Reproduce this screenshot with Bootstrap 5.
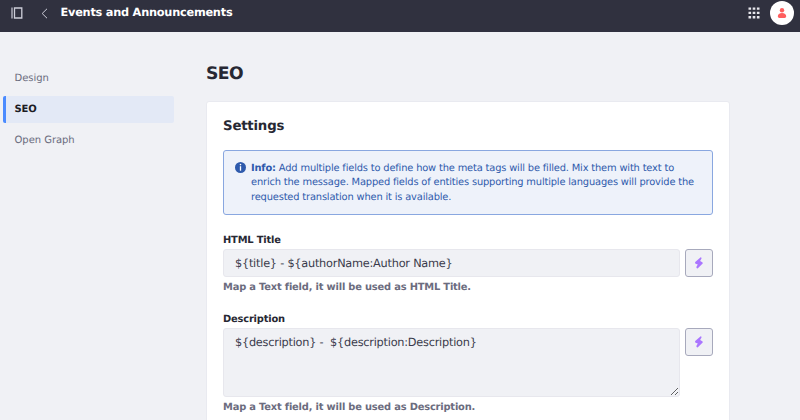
<!DOCTYPE html>
<html lang="en">
<head>
<meta charset="utf-8">
<meta name="viewport" content="width=device-width, initial-scale=1">
<title>Events and Announcements</title>
<link href="https://cdn.jsdelivr.net/npm/bootstrap@5.3.0/dist/css/bootstrap.min.css" rel="stylesheet">
<style>
body{font-family:"DejaVu Sans",sans-serif;background:#f0f1f5;color:#272833;font-size:10px;height:420px;overflow:hidden;text-rendering:geometricPrecision}
svg{display:block;flex:none}
.topbar{height:32px;background:#30313f;padding:0 6px 6px 11px}
.topbar h1{font-size:11.3px;line-height:16px;margin-left:12.5px;color:#fff;letter-spacing:-.22px}
.topbar .avatar{width:24px;height:24px;background:#fff;margin-left:10px}
.side{width:174px;padding:33px 0 0 3px}
.side .nav-link{height:27px;margin-bottom:4px;padding:0 0 0 8.5px;border-left:3px solid transparent;border-radius:2px;color:#6b6c7e;font-size:10px;line-height:28px;letter-spacing:-.04px}
.side .nav-link.active{background:#e3e9f6;border-left-color:#4b8bff;color:#1c1c24;font-weight:700;letter-spacing:-.1px}
.content-col{width:524px;margin-left:32px;padding-top:31px}
.content-col h2{font-size:17.2px;line-height:22px;margin-bottom:16px;letter-spacing:-.55px}
.panel{border:1px solid #e9eaf0;border-radius:3px;padding:16px 16px;height:340px}
.panel h3{font-size:13.3px;line-height:18px;margin-bottom:14px;letter-spacing:-.2px}
.info-box{background:#eef2fa;border:1px solid #89a7e0;border-radius:3px;color:#2e5aac;padding:11px 12px 9px 11px;height:65px;line-height:14.3px;font-size:9.9px;margin-bottom:18px;gap:5px;white-space:nowrap;letter-spacing:-.17px}
.form-label{font-size:9.9px;line-height:15px;font-weight:700;margin:0 0 1px;display:block;letter-spacing:-.18px}
.form-control,.form-control:focus{background:#f0f1f5;border:1px solid #e7e7ed;border-radius:3px;color:#393a4a;font-size:11.3px;padding:0 11px;height:28px;box-shadow:none;text-rendering:inherit;letter-spacing:-.23px}
textarea.form-control{height:69px;min-height:0;padding-top:5px;line-height:17px}
.map-btn,.map-btn:hover{width:28px;height:28px;border:1px solid #a7a9bc;border-radius:3px;background:#f0f1f5;flex:none}
.hint{font-size:9.9px;line-height:15px;font-weight:700;color:#6b6c7e;margin-top:3px;letter-spacing:-.18px}
.field{margin-bottom:17px}
.field .d-flex{gap:5px}
</style>
<script src="https://cdn.jsdelivr.net/npm/bootstrap@5.3.0/dist/js/bootstrap.bundle.min.js"></script>
</head>
<body>
<header class="topbar d-flex align-items-center">
  <svg width="12" height="12" viewBox="0 0 12 12" fill="none" stroke="#cdced9"><path d="M1 .5v11" stroke-width="1.2"/><path d="M3.5 1h7.300v10H3.500z" stroke-width="1.300"/></svg>
  <svg width="7" height="11" viewBox="0 0 7 11" style="margin-left:18px" fill="none" stroke="#cdced9"><path d="M6 .8 1.200 5.500 6 10.200"/></svg>
  <h1 class="fw-bold mb-0">Events and Announcements</h1>
  <svg class="ms-auto" width="12" height="12" viewBox="0 0 12 12" fill="#e7e7ed"><path d="M.5.5h2.6v2.3H.5zM4.7.5h2.6v2.3H4.7zM8.9.5h2.6v2.3H8.9zM.5 4.8h2.6v2.3H.5zM4.7 4.8h2.6v2.3H4.7zM8.9 4.8h2.6v2.3H8.9zM.5 9.1h2.6v2.3H.5zM4.7 9.1h2.6v2.3H4.7zM8.9 9.1h2.6v2.3H8.9z"/></svg>
  <span class="avatar rounded-circle d-flex align-items-center justify-content-center"><svg width="10" height="10" viewBox="0 0 10 10" fill="#ff5f5f"><circle cx="5" cy="2.2" r="2.2"/><path d="M.8 8.3C.8 6.4 2.4 5.1 5 5.1s4.200 1.300 4.200 3.200C9.200 9.500 8.400 9.900 7.700 9.900H2.300C1.600 9.900.8 9.500.8 8.300z"/></svg></span>
</header>
<div class="d-flex">
  <nav class="side nav flex-column flex-nowrap">
    <a class="nav-link" href="#">Design</a>
    <a class="nav-link active" href="#">SEO</a>
    <a class="nav-link" href="#">Open Graph</a>
  </nav>
  <main class="content-col">
    <h2 class="fw-bold">SEO</h2>
    <section class="panel bg-white">
      <h3 class="fw-bold">Settings</h3>
      <div class="info-box d-flex" role="alert">
        <svg width="11" height="11" viewBox="0 0 11 11"><circle cx="5.500" cy="5.500" r="5.500" fill="#2e5aac"/><circle cx="5.500" cy="2.600" r=".8" fill="#fff"/><path d="M5.500 4.200v4.500" stroke="#fff" stroke-width="1.300"/></svg>
        <div><strong>Info:</strong> Add multiple fields to define how the meta tags will be filled. Mix them with text to<br>enrich the message. Mapped fields of entities supporting multiple languages will provide the<br>requested translation when it is available.</div>
      </div>
      <div class="field">
        <label class="form-label" for="title">HTML Title</label>
        <div class="d-flex align-items-start">
          <input class="form-control" id="title" value="${title} - ${authorName:Author Name}">
          <button class="btn map-btn p-0 d-flex align-items-center justify-content-center" aria-label="Map"><svg width="8" height="12" viewBox="0 0 8 12"><path d="M5.700.2.200 5Q-.2 6 .600 6.700L2.800 7.600 1.300 10Q1.500 11.600 2.600 11.400L7.700 6.600Q8 5.400 6.900 4.900L5.100 4.100 6.500 1.600Q6.600.3 5.700.2z" fill="#aa76ff"/></svg></button>
        </div>
        <div class="hint">Map a Text field, it will be used as HTML Title.</div>
      </div>
      <div class="field">
        <label class="form-label" for="desc">Description</label>
        <div class="d-flex align-items-start">
          <textarea class="form-control" id="desc">${description} -  ${description:Description}</textarea>
          <button class="btn map-btn p-0 d-flex align-items-center justify-content-center" aria-label="Map"><svg width="8" height="12" viewBox="0 0 8 12"><path d="M5.700.2.200 5Q-.2 6 .600 6.700L2.800 7.600 1.300 10Q1.500 11.600 2.600 11.400L7.700 6.600Q8 5.400 6.900 4.900L5.100 4.100 6.500 1.600Q6.600.3 5.700.2z" fill="#aa76ff"/></svg></button>
        </div>
        <div class="hint">Map a Text field, it will be used as Description.</div>
      </div>
    </section>
  </main>
</div>
</body>
</html>
